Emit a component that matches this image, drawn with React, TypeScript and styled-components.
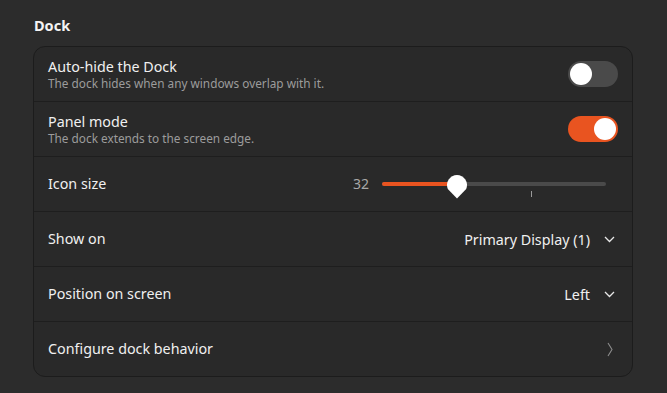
import React from "react";
import styled, { createGlobalStyle } from "styled-components";

const Global = createGlobalStyle`
  html, body { margin: 0; padding: 0; background: #2c2c2c; }
  body { font-family: "Noto Sans", "Open Sans", sans-serif; color: #ffffff; }
`;

const Page = styled.div`
  width: 667px;
  height: 393px;
  box-sizing: border-box;
  padding: 14px 34px 0 33px;
  background: #2c2c2c;
`;

const Heading = styled.h2`
  margin: 0 0 0 1px;
  font-size: 14.5px;
  font-weight: 700;
  line-height: 22px;
  height: 32px;
  color: #f4f4f4;
`;

const Card = styled.div`
  border: 1px solid #1c1c1c;
  border-radius: 12px;
  background: #292929;
  overflow: hidden;
`;

const Row = styled.div`
  height: 54px;
  display: flex;
  align-items: center;
  padding: 0 14px;
  gap: 12px;
  & + & { border-top: 1px solid #1e1e1e; }
`;

const Labels = styled.div`
  flex: 1;
  display: flex;
  flex-direction: column;
  min-width: 0;
`;

const Title = styled.div`
  font-size: 14.3px;
  line-height: 18px;
  color: #f0f0f0;
`;

const Subtitle = styled.div`
  font-size: 11.8px;
  line-height: 15px;
  color: #9c9c9c;
`;

const Track = styled.div<{ $on: boolean }>`
  width: 50px;
  height: 26px;
  border-radius: 13px;
  box-sizing: border-box;
  padding: 2px;
  display: flex;
  justify-content: ${(p) => (p.$on ? "flex-end" : "flex-start")};
  background: ${(p) => (p.$on ? "#e95420" : "#4a4a4a")};
`;

const Knob = styled.div`
  width: 22px;
  height: 22px;
  border-radius: 50%;
  background: #ffffff;
`;

const Toggle = ({ on }: { on: boolean }) => (
  <Track $on={on}>
    <Knob />
  </Track>
);

const SliderWrap = styled.div`
  display: flex;
  align-items: center;
  gap: 13px;
  margin-right: 12px;
`;

const Value = styled.span`
  font-size: 14px;
  color: #a8a8a8;
  width: 17px;
  text-align: right;
  position: relative;
  top: -1px;
`;

const Scale = styled.div`
  position: relative;
  width: 224px;
  height: 30px;
`;

const ScaleTrack = styled.div`
  position: absolute;
  left: 0;
  right: 0;
  top: 13px;
  height: 4px;
  border-radius: 2px;
  background: #4a4a4a;
`;

const ScaleFill = styled.div`
  position: absolute;
  left: 0;
  top: 13px;
  height: 4px;
  border-radius: 2px;
  background: #e95420;
`;

const Tick = styled.div`
  position: absolute;
  top: 22px;
  width: 1px;
  height: 6px;
  background: #9a9a9a;
`;

const Thumb = styled.svg`
  position: absolute;
  top: 5px;
`;

const Slider = ({ value, min, max, ticks }: { value: number; min: number; max: number; ticks: number[] }) => {
  const w = 224;
  const pos = ((value - min) / (max - min)) * w;
  return (
    <SliderWrap>
      <Value>{value}</Value>
      <Scale>
        <ScaleTrack />
        <ScaleFill style={{ width: pos }} />
        {ticks.map((t) => (
          <Tick key={t} style={{ left: ((t - min) / (max - min)) * w }} />
        ))}
        <Thumb width="22" height="26" viewBox="0 0 22 26" style={{ left: pos - 11 }}>
          <path d="M11 1 A10 10 0 0 1 20.2 14.9 L11 24.5 L1.8 14.9 A10 10 0 0 1 11 1 Z" fill="#ffffff" />
        </Thumb>
      </Scale>
    </SliderWrap>
  );
};

const Dropdown = styled.div`
  display: flex;
  align-items: center;
  gap: 14px;
  font-size: 14.3px;
  color: #f0f0f0;
  margin-right: 3px;
`;

const Chevron = () => (
  <svg width="11" height="7" viewBox="0 0 11 7">
    <path d="M1 1 L5.5 5.5 L10 1" fill="none" stroke="#e8e8e8" strokeWidth="1.3" />
  </svg>
);

const Arrow = styled.svg`
  margin-right: 5px;
`;

export default function App() {
  return (
    <Page>
      <Global />
      <Heading>Dock</Heading>
      <Card>
        <Row>
          <Labels>
            <Title>Auto-hide the Dock</Title>
            <Subtitle>The dock hides when any windows overlap with it.</Subtitle>
          </Labels>
          <Toggle on={false} />
        </Row>
        <Row>
          <Labels>
            <Title>Panel mode</Title>
            <Subtitle>The dock extends to the screen edge.</Subtitle>
          </Labels>
          <Toggle on={true} />
        </Row>
        <Row>
          <Labels>
            <Title>Icon size</Title>
          </Labels>
          <Slider value={32} min={16} max={64} ticks={[48]} />
        </Row>
        <Row>
          <Labels>
            <Title>Show on</Title>
          </Labels>
          <Dropdown>
            Primary Display (1)
            <Chevron />
          </Dropdown>
        </Row>
        <Row>
          <Labels>
            <Title>Position on screen</Title>
          </Labels>
          <Dropdown>
            Left
            <Chevron />
          </Dropdown>
        </Row>
        <Row>
          <Labels>
            <Title>Configure dock behavior</Title>
          </Labels>
          <Arrow width="6" height="15" viewBox="0 0 6 15">
            <path d="M1 1 L5 7.5 L1 14" fill="none" stroke="#8c8c8c" strokeWidth="1.1" />
          </Arrow>
        </Row>
      </Card>
    </Page>
  );
}
